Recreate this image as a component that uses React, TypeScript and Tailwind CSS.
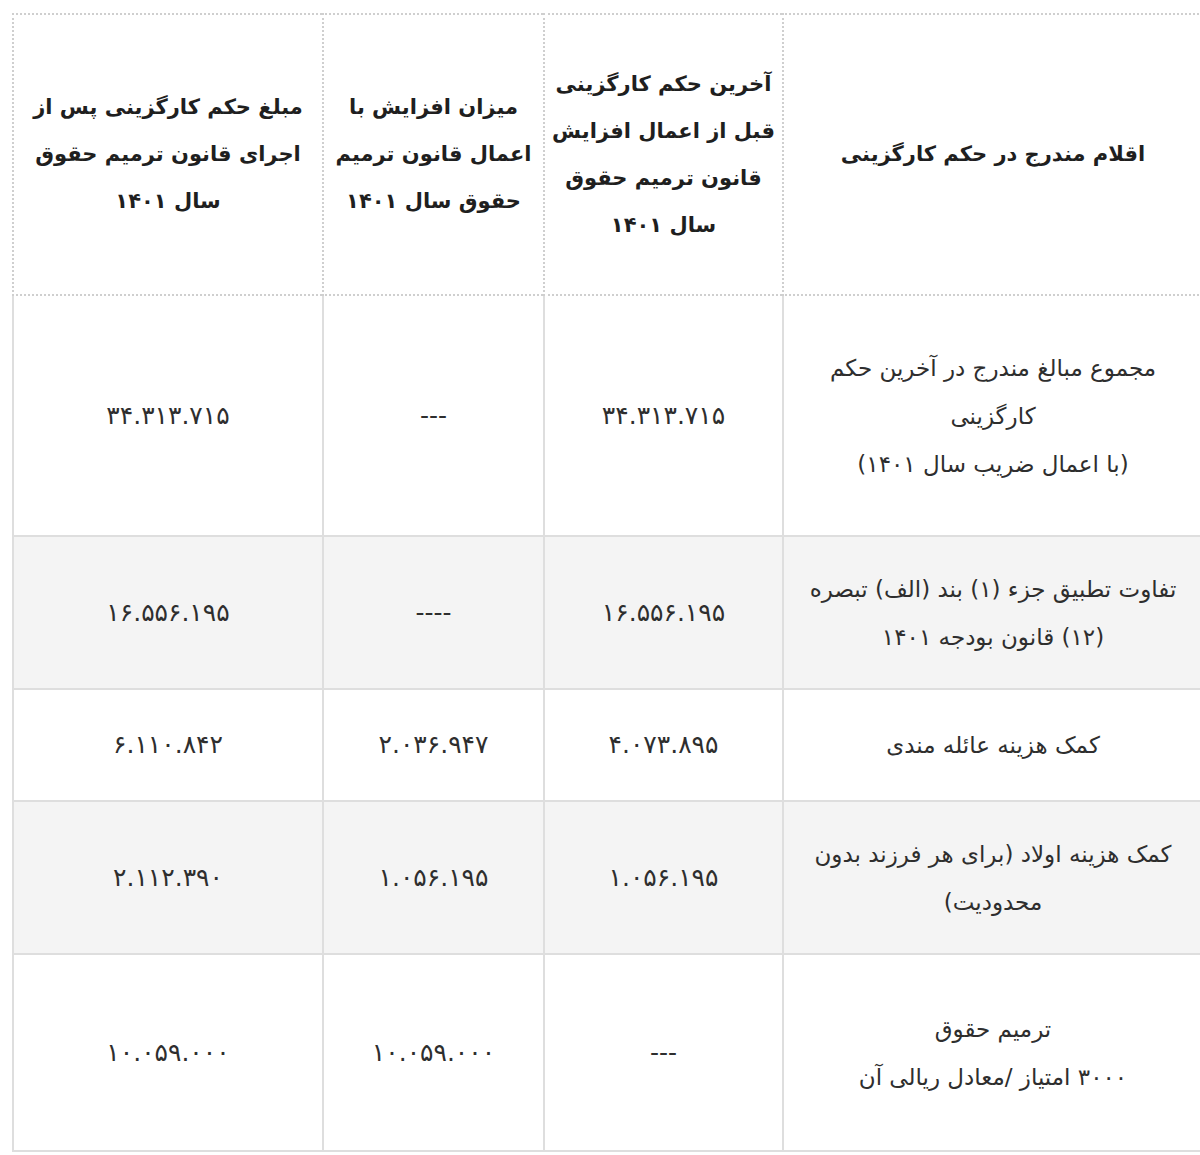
const head = [
  ["اقلام مندرج در حکم کارگزینی"],
  ["آخرین حکم کارگزینی", "قبل از اعمال افزایش", "قانون ترمیم حقوق", "سال ۱۴۰۱"],
  ["میزان افزایش با", "اعمال قانون ترمیم", "حقوق سال ۱۴۰۱"],
  ["مبلغ حکم کارگزینی پس از", "اجرای قانون ترمیم حقوق", "سال ۱۴۰۱"],
];

const rows: { h: string; bg: string; cells: string[][] }[] = [
  {
    h: "h-[241px]",
    bg: "bg-white",
    cells: [
      ["مجموع مبالغ مندرج در آخرین حکم", "کارگزینی", "(با اعمال ضریب سال ۱۴۰۱)"],
      ["۳۴.۳۱۳.۷۱۵"],
      ["---"],
      ["۳۴.۳۱۳.۷۱۵"],
    ],
  },
  {
    h: "h-[153px]",
    bg: "bg-[#f4f4f4]",
    cells: [
      ["تفاوت تطبیق جزء (۱) بند (الف) تبصره", "(۱۲) قانون بودجه ۱۴۰۱"],
      ["۱۶.۵۵۶.۱۹۵"],
      ["----"],
      ["۱۶.۵۵۶.۱۹۵"],
    ],
  },
  {
    h: "h-[112px]",
    bg: "bg-white",
    cells: [["کمک هزینه عائله مندی"], ["۴.۰۷۳.۸۹۵"], ["۲.۰۳۶.۹۴۷"], ["۶.۱۱۰.۸۴۲"]],
  },
  {
    h: "h-[153px]",
    bg: "bg-[#f4f4f4]",
    cells: [
      ["کمک هزینه اولاد (برای هر فرزند بدون", "محدودیت)"],
      ["۱.۰۵۶.۱۹۵"],
      ["۱.۰۵۶.۱۹۵"],
      ["۲.۱۱۲.۳۹۰"],
    ],
  },
  {
    h: "h-[197px]",
    bg: "bg-white",
    cells: [
      ["ترمیم حقوق", "۳۰۰۰ امتیاز /معادل ریالی آن"],
      ["---"],
      ["۱۰.۰۵۹.۰۰۰"],
      ["۱۰.۰۵۹.۰۰۰"],
    ],
  },
];

const Lines = ({ lines }: { lines: string[] }) => (
  <>
    {lines.map((l, i) => (
      <div key={i}>{l}</div>
    ))}
  </>
);

export default function App() {
  return (
    <div className="w-[1200px] h-[1155px] overflow-hidden bg-white pt-[13px] pl-[12px]">
      <table
        dir="rtl"
        className="w-[1190px] table-fixed border-separate border-spacing-0 text-center text-[#2e2e2e]"
        style={{ fontFamily: '"DejaVu Sans", sans-serif' }}
      >
        <colgroup>
          <col className="w-[420px]" />
          <col className="w-[239px]" />
          <col className="w-[221px]" />
          <col className="w-[310px]" />
        </colgroup>
        <thead>
          <tr className="h-[283px]">
            {head.map((c, i) => (
              <th
                key={i}
                className="border-t-2 border-b-2 border-l-2 border-dotted border-[#cfcfcf] align-middle text-[21px] font-bold leading-[47px] text-[#1f1f1f]"
              >
                <Lines lines={c} />
              </th>
            ))}
          </tr>
        </thead>
        <tbody>
          {rows.map((r, ri) => (
            <tr key={ri} className={`${r.h} ${r.bg}`}>
              {r.cells.map((c, ci) => (
                <td
                  key={ci}
                  className={`border-b-2 border-l-2 border-solid border-[#dedede] align-middle leading-[48px] ${
                    ci === 0 ? "text-[23px]" : "text-[25px]"
                  }`}
                >
                  <Lines lines={c} />
                </td>
              ))}
            </tr>
          ))}
        </tbody>
      </table>
    </div>
  );
}
